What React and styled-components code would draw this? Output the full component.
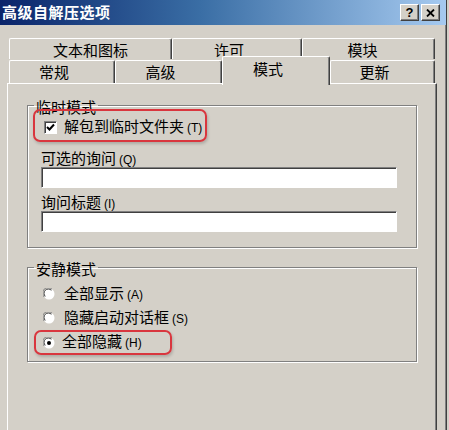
import React from 'react';
import styled, { createGlobalStyle } from 'styled-components';

const GlobalStyle = createGlobalStyle`
  html, body {
    margin: 0;
    padding: 0;
    background: #d4d0c8;
  }
  body {
    font-family: "Liberation Sans", "Noto Sans CJK SC", sans-serif;
    color: #000;
  }
`;

const tabsBack = [
  { label: '文本和图标', width: 163, offset: 0 },
  { label: '许可', width: 130, offset: 16 },
  { label: '模块', width: 133, offset: 12 },
];

const tabsFront = [
  { label: '常规', width: 106 },
  { label: '高级', width: 107 },
  { label: '模式', width: 108, selected: true },
  { label: '更新', width: 105 },
];

const CheckMark = () => (
  <svg width="9" height="9" viewBox="0 0 9 9">
    <path d="M1 4 L3.5 6.5 L8 1.5" fill="none" stroke="#000" strokeWidth="2" />
  </svg>
);

const Radio = ({ checked }) => (
  <svg width="12" height="12" viewBox="0 0 12 12">
    <circle cx="6" cy="6" r="5.5" fill="#fff" />
    <path d="M1.2 9 A5 5 0 0 1 9 1.2" fill="none" stroke="#808080" strokeWidth="1" />
    <path d="M2.3 8.4 A4 4 0 0 1 8.4 2.3" fill="none" stroke="#404040" strokeWidth="1" />
    {checked && <circle cx="6" cy="6" r="2" fill="#000" />}
  </svg>
);

const Mn = ({ k }) => <Mnemonic>({k})</Mnemonic>;

const App = () => {
  return (
    <>
      <GlobalStyle />
      <Window>
        <TitleBar>
          <Title>高级自解压选项</Title>
          <TitleButtons>
            <CaptionButton>?</CaptionButton>
            <CaptionButton>
              <svg width="9" height="8" viewBox="0 0 9 8">
                <path d="M1 0.5 L8 7.5 M8 0.5 L1 7.5" stroke="#000" strokeWidth="1.8" />
              </svg>
            </CaptionButton>
          </TitleButtons>
        </TitleBar>

        <Body>
          <TabStrip>
            <TabRow $h={21}>
              {tabsBack.map((t) => (
                <Tab key={t.label} $w={t.width} $offset={t.offset} $back>
                  {t.label}
                </Tab>
              ))}
            </TabRow>
            <TabRow $h={24}>
              {tabsFront.map((t) => (
                <Tab key={t.label} $w={t.width} $offset={16} $selected={t.selected}>
                  {t.label}
                </Tab>
              ))}
            </TabRow>
          </TabStrip>

          <Panel>
            <GroupBox>
              <Legend>临时模式</Legend>
              <Highlight $first $pr={3}>
                <Option>
                  <CheckBox>
                    <CheckMark />
                  </CheckBox>
                  <span>
                    解包到临时文件夹<Mn k="T" />
                  </span>
                </Option>
              </Highlight>
              <FieldLabel $mt={8}>
                可选的询问<Mn k="Q" />
              </FieldLabel>
              <TextInput />
              <FieldLabel $mt={6}>
                询问标题<Mn k="I" />
              </FieldLabel>
              <TextInput />
            </GroupBox>

            <GroupBox $quiet>
              <Legend>安静模式</Legend>
              <RadioRow $mt={4}>
                <Option>
                  <Radio />
                  <span>
                    全部显示<Mn k="A" />
                  </span>
                </Option>
              </RadioRow>
              <RadioRow>
                <Option>
                  <Radio />
                  <span>
                    隐藏启动对话框<Mn k="S" />
                  </span>
                </Option>
              </RadioRow>
              <Highlight $pr={28} $radio>
                <Option>
                  <Radio checked />
                  <span>
                    全部隐藏<Mn k="H" />
                  </span>
                </Option>
              </Highlight>
            </GroupBox>
          </Panel>
        </Body>
      </Window>
    </>
  );
};

export default App;

const Window = styled.div`
  width: 447px;
  height: 430px;
  overflow: hidden;
  display: flex;
  flex-direction: column;
  background: #d4d0c8;
  border-right: 1px solid #404040;
  box-shadow: inset -1px 0 0 #808080;
  box-sizing: border-box;
`;

const TitleBar = styled.div`
  height: 25px;
  flex: none;
  display: flex;
  align-items: center;
  justify-content: space-between;
  padding: 0 6px 0 2px;
  background: linear-gradient(90deg, #0a246a 0%, #3a6ea5 45%, #a6caf0 100%);
`;

const Title = styled.div`
  color: #fff;
  font-size: 15px;
  font-weight: bold;
  letter-spacing: 0.5px;
  line-height: 18px;
`;

const TitleButtons = styled.div`
  display: flex;
  gap: 2px;
`;

const CaptionButton = styled.div`
  width: 19px;
  height: 17px;
  box-sizing: border-box;
  display: flex;
  align-items: center;
  justify-content: center;
  background: #d4d0c8;
  border-top: 1px solid #fff;
  border-left: 1px solid #fff;
  border-right: 1px solid #404040;
  border-bottom: 1px solid #404040;
  box-shadow: inset -1px -1px 0 #808080;
  font-family: "Liberation Sans", sans-serif;
  font-weight: bold;
  font-size: 13px;
`;

const Body = styled.div`
  flex: 1;
  display: flex;
  flex-direction: column;
  padding: 13px 0 0 7px;
  width: 430px;
`;

const TabStrip = styled.div`
  display: flex;
  flex-direction: column;
  margin: 0 2px;
`;

const TabRow = styled.div`
  display: flex;
  align-items: flex-start;
  height: ${(p) => p.$h}px;
`;

const Tab = styled.div`
  width: ${(p) => p.$w}px;
  height: ${(p) => (p.$selected ? 29 : p.$back ? 21 : 23)}px;
  margin-top: ${(p) => (p.$selected ? -3 : p.$back ? 0 : 1)}px;
  margin-bottom: ${(p) => (p.$selected ? -2 : 0)}px;
  position: relative;
  z-index: ${(p) => (p.$selected ? 1 : 0)};
  box-sizing: border-box;
  display: flex;
  align-items: ${(p) => (p.$selected ? 'flex-start' : 'center')};
  justify-content: center;
  padding-right: ${(p) => p.$offset}px;
  padding-top: ${(p) => (p.$selected ? 4 : p.$back ? 2 : 0)}px;
  background: #d4d0c8;
  border-top: 1px solid #fff;
  border-left: 1px solid #fff;
  border-right: 1px solid #404040;
  box-shadow: inset -1px 0 0 #808080;
  border-radius: 2px 2px 0 0;
  font-size: 15px;
  line-height: 17px;
`;

const Panel = styled.div`
  flex: 1;
  display: flex;
  flex-direction: column;
  padding: 10px 19px 0 19px;
  background: #d4d0c8;
  border-top: 1px solid #fff;
  border-left: 1px solid #fff;
  border-right: 1px solid #404040;
  box-shadow: inset -1px 0 0 #808080;
`;

const GroupBox = styled.fieldset`
  margin: ${(p) => (p.$quiet ? '8px 0 0' : '0')};
  padding: 0 19px ${(p) => (p.$quiet ? 6 : 15)}px 13px;
  border: 1px solid #808080;
  box-shadow: 1px 1px 0 #fff, inset 1px 1px 0 #fff;
  display: flex;
  flex-direction: column;
  align-items: flex-start;
  min-width: 0;
`;

const Legend = styled.legend`
  padding: 6px 2px 0;
  margin-left: -7px;
  font-size: 15px;
  line-height: 16px;
`;

const Highlight = styled.div`
  margin: ${(p) => (p.$first ? -7 : 0)}px 0 0 ${(p) => (p.$radio ? -7 : -8)}px;
  height: ${(p) => (p.$radio ? 25 : 33)}px;
  box-sizing: border-box;
  display: flex;
  align-items: ${(p) => (p.$radio ? 'center' : 'flex-start')};
  padding: ${(p) => (p.$radio ? 0 : 4)}px ${(p) => p.$pr}px 0 ${(p) => (p.$radio ? 7 : 9)}px;
  border: 2px solid #d9363e;
  border-radius: 7px;
  box-shadow: 1px 2px 3px rgba(0, 0, 0, 0.18);
`;

const Option = styled.label`
  display: flex;
  align-items: center;
  gap: 7px;
  height: 25px;
  font-size: 15px;
  line-height: 17px;
  white-space: nowrap;
`;

const RadioRow = styled.div`
  margin-top: ${(p) => p.$mt || 0}px;
  padding-left: 2px;
  height: 24px;
  display: flex;
  align-items: center;

  ${Option} {
    height: 24px;
    gap: 9px;
  }
`;

const CheckBox = styled.span`
  width: 13px;
  height: 13px;
  box-sizing: border-box;
  display: flex;
  align-items: center;
  justify-content: center;
  background: #fff;
  border-top: 1px solid #808080;
  border-left: 1px solid #808080;
  border-right: 1px solid #fff;
  border-bottom: 1px solid #fff;
  box-shadow: inset 1px 1px 0 #404040;
`;

const Mnemonic = styled.span`
  font-family: "Liberation Sans", sans-serif;
  font-size: 12px;
  margin-left: 3px;
`;

const FieldLabel = styled.div`
  margin-top: ${(p) => p.$mt}px;
  height: 17px;
  font-size: 15px;
  line-height: 17px;
  white-space: nowrap;
`;

const TextInput = styled.div`
  width: 356px;
  height: 21px;
  box-sizing: border-box;
  background: #fff;
  border-top: 1px solid #808080;
  border-left: 1px solid #808080;
  border-right: 1px solid #fff;
  border-bottom: 1px solid #fff;
  box-shadow: inset 1px 1px 0 #404040;
`;
